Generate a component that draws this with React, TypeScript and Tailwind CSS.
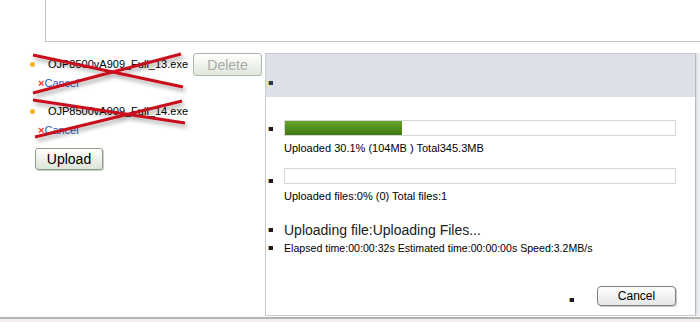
import React from "react";

const files = ["OJP8500vA909_Full_13.exe", "OJP8500vA909_Full_14.exe"];

function Sq({ className = "" }: { className?: string }) {
  return <span className={`block w-[4px] h-[4px] shrink-0 bg-[#1b1d2e] shadow-[-1px_0_0_#e8a040] ${className}`} />;
}

export default function App() {
  return (
    <div className="w-[700px] h-[322px] bg-white overflow-hidden font-['Liberation_Sans',Arial,sans-serif] text-black">
      <div className="ml-[45px] h-[42px] border-l border-b border-[#c3c3c3]" />
      <div className="flex h-[275px]">
        <div className="relative w-[265px] shrink-0">
          <div className="flex">
            <ul className="ml-[30px] mt-[14px] w-[158px]">
              {files.map((f, i) => (
                <li key={f} className={i > 0 ? "mt-[13px]" : ""}>
                  <div className="flex items-center h-[16px]">
                    <span className="w-[5px] h-[5px] rounded-full bg-[#f2b320]" />
                    <span className="ml-[13px] text-[11px] leading-none whitespace-nowrap">{f}</span>
                  </div>
                  <div className="mt-[4px] h-[14px] pl-[8px] flex items-center text-[11px] leading-none">
                    <span className="text-[#e8401c] font-bold">×</span>
                    <span className="text-[#2a55c0]">Cancel</span>
                  </div>
                </li>
              ))}
            </ul>
            <button className="ml-[5px] mt-[11px] w-[69px] h-[23px] rounded-[3px] border border-[#a9b8a6] bg-gradient-to-b from-white to-[#e1e7dc] text-[14px] text-[#a7aca6] leading-none">
              Delete
            </button>
          </div>
          <button className="ml-[35px] mt-[11px] w-[68px] h-[22px] rounded-[3px] border border-[#8d9d8a] bg-gradient-to-b from-white to-[#dde4d8] text-[14px] leading-none shadow-[1px_1px_0_#c8d0c4]">
            Upload
          </button>
          <svg className="absolute left-0 top-0 pointer-events-none" width="200" height="110" viewBox="0 42 200 110">
            <defs>
              <filter id="sh" x="-10%" y="-30%" width="130%" height="180%">
                <feDropShadow dx="2" dy="3" stdDeviation="2" floodColor="#000" floodOpacity="0.35" />
              </filter>
            </defs>
            <g stroke="#c8111d" strokeWidth="3" strokeLinecap="butt" filter="url(#sh)">
              <line x1="33" y1="55" x2="183" y2="87" />
              <line x1="33" y1="93" x2="181" y2="54" />
              <line x1="33" y1="100" x2="185" y2="123" />
              <line x1="35" y1="137" x2="182" y2="101" />
            </g>
          </svg>
        </div>
        <div className="mt-[11px] w-[431px] h-[263px] border border-[#c6cbd1] border-r-[#b4bcc5] shadow-[2px_0_0_#dfe3e8,4px_0_0_#eef0f3] flex flex-col">
          <div className="h-[43px] bg-[#dde0e6] flex items-end pb-[12px] pl-[3px]">
            <Sq className="bg-[#1e3864]" />
          </div>
          <div className="pl-[3px] flex flex-col">
            <div className="mt-[23px] flex items-end">
              <Sq className="mb-[5px]" />
              <div className="ml-[11px] w-[392px] h-[16px] border border-[#d6d6d6] p-0">
                <div className="h-full w-[30.1%] bg-gradient-to-b from-[#66a52b] to-[#3e7a0f]" />
              </div>
            </div>
            <div className="mt-[5px] pl-[15px] h-[14px] flex items-center text-[11px] leading-none whitespace-nowrap">
              Uploaded 30.1% (104MB ) Total345.3MB
            </div>
            <div className="mt-[13px] flex items-end">
              <Sq className="mb-[1px]" />
              <div className="ml-[11px] w-[392px] h-[16px] border border-[#d6d6d6]" />
            </div>
            <div className="mt-[5px] pl-[15px] h-[14px] flex items-center text-[11px] leading-none whitespace-nowrap">
              Uploaded files:0% (0) Total files:1
            </div>
            <div className="mt-[18px] h-[18px] flex items-center">
              <Sq />
              <span className="ml-[11px] text-[14px] leading-none whitespace-nowrap text-[#202020]">Uploading file:Uploading Files...</span>
            </div>
            <div className="mt-[2px] h-[14px] flex items-center">
              <Sq />
              <span className="ml-[11px] text-[10.6px] leading-none whitespace-nowrap">Elapsed time:00:00:32s Estimated time:00:00:00s Speed:3.2MB/s</span>
            </div>
            <div className="mt-[31px] flex items-end justify-end pr-[19px]">
              <Sq className="mb-[4px]" />
              <button className="ml-[23px] w-[79px] h-[20px] rounded-[4px] border border-[#7f7f7f] bg-gradient-to-b from-white to-[#e6e6e6] shadow-[1px_1px_0_#c8c8c8] text-[12px] leading-none">
                Cancel
              </button>
            </div>
          </div>
        </div>
      </div>
      <div className="h-[5px] border-t-2 border-[#b4b4b4] bg-[#f2eeee]" />
    </div>
  );
}
